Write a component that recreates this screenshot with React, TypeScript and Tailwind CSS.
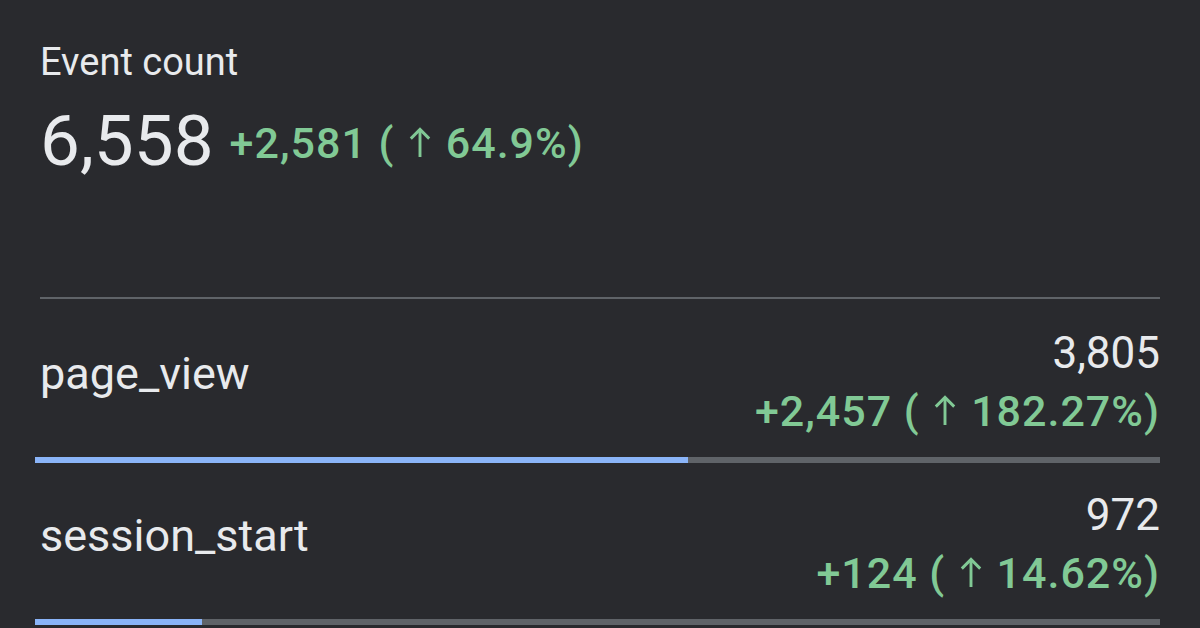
import React from "react";

const rows = [
  { name: "page_view", value: "3,805", plus: "+2,457", pctText: "182.27%", pct: 58 },
  { name: "session_start", value: "972", plus: "+124", pctText: "14.62%", pct: 14.8 },
];

function UpArrow() {
  return (
    <svg
      viewBox="0 0 22 32"
      className="mx-[3px] inline-block h-[31px] w-[22px] align-baseline"
      fill="none"
      stroke="currentColor"
      strokeWidth="3"
      strokeLinecap="butt"
      strokeLinejoin="miter"
    >
      <path d="M11 31V2.5" />
      <path d="M1.5 12L11 2.5L20.5 12" />
    </svg>
  );
}

function Delta({ plus, pctText }: { plus: string; pctText: string }) {
  return (
    <span className="whitespace-nowrap">
      {plus} ( <UpArrow /> {pctText})
    </span>
  );
}

export default function App() {
  return (
    <div
      className="w-[1200px] h-[628px] overflow-hidden bg-[#292a2e] px-[40px] pt-[40px]"
      style={{ fontFamily: "Roboto, 'Noto Sans', sans-serif" }}
    >
      <div className="text-[38px] leading-[44px] text-[#e8eaed]">Event count</div>
      <div className="mt-[17px] flex items-end gap-[16px]">
        <span className="text-[71px] leading-[80px] text-[#e8eaed]">6,558</span>
        <span className="mb-[13px] text-[43px] leading-[50px] font-medium tracking-[1px] text-[#81c995]">
          <Delta plus="+2,581" pctText="64.9%" />
        </span>
      </div>
      <div className="mt-[116px] h-[2px] bg-[#5f6368]" />
      {rows.map((r, i) => (
        <div key={r.name} className={i === 0 ? "pt-[25px]" : "pt-[23px]"}>
          <div className="flex items-center justify-between">
            <div className="pb-[16px] text-[45px] leading-[58px] text-[#e8eaed]">{r.name}</div>
            <div className="flex flex-col items-end">
              <div className="text-[44px] leading-[58px] text-[#e8eaed]">{r.value}</div>
              <div className="text-[43px] leading-[58px] font-medium tracking-[1px] text-[#81c995]">
                <Delta plus={r.plus} pctText={r.pctText} />
              </div>
            </div>
          </div>
          <div className="mt-[17px] ml-[-5px] flex h-[6px] bg-[#5f6368]">
            <div className="h-full bg-[#8ab4f8]" style={{ width: `${r.pct}%` }} />
          </div>
        </div>
      ))}
    </div>
  );
}
